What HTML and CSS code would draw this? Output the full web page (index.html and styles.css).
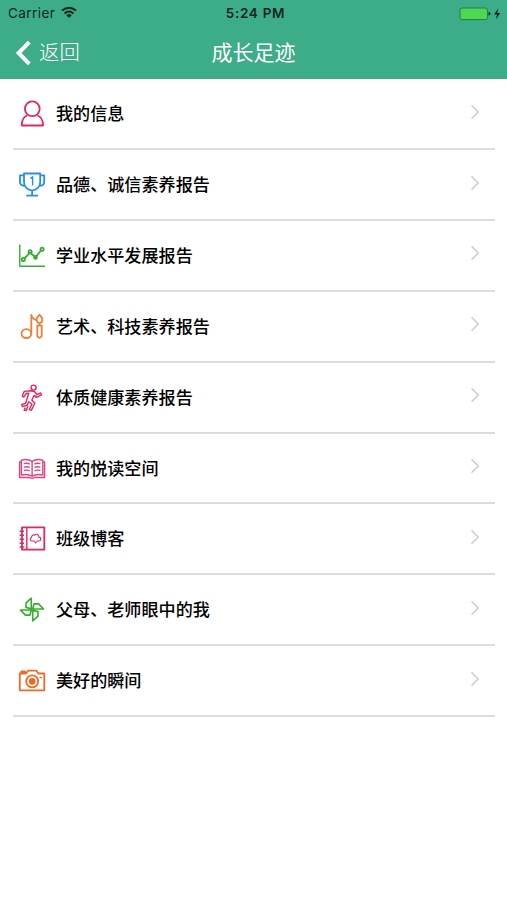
FILE: index.html
```html
<!DOCTYPE html>
<html lang="zh-CN">
<head>
<meta charset="utf-8">
<title>成长足迹</title>
<link rel="stylesheet" href="styles.css">
</head>
<body>
<header class="header">
  <div class="status">
    <div class="carrier"><span>Carrier</span>
      <svg class="wifi" width="16" height="13" viewBox="0 0 16 13"><g fill="none" stroke="#10271f" stroke-width="1.9"><path d="M1 4.6Q8-1.3 15 4.6"/><path d="M3.5 7.4Q8 3.6 12.5 7.4"/></g><path d="M5.2 9.2Q8 7 10.8 9.2L8 12z" fill="#10271f"/></svg>
    </div>
    <div class="time">5:24 PM</div>
    <div class="power">
      <svg width="44" height="14" viewBox="0 0 44 14"><rect x="1" y="1" width="27.5" height="11.6" rx="2.2" fill="#4cd94f" stroke="#267c4c" stroke-width="1"/><path d="M29.5 5q2 .2 2 1.8t-2 1.8z" fill="#10271f"/><path d="M39.2 1.5L35 7.5h3l-1 4.7 4.3-6.2h-3z" fill="#10271f"/></svg>
    </div>
  </div>
  <nav class="nav">
    <a class="back"><svg width="18" height="28" viewBox="0 0 18 28"><path d="M14.3 3.2L3.6 14l10.7 10.8" fill="none" stroke="#fff" stroke-width="4"/></svg><span>返回</span></a>
    <h1 class="title">成长足迹</h1>
  </nav>
</header>
<ul class="list">
  <li class="row">
    <svg class="icon pink" viewBox="0 0 32 32"><circle cx="16.3" cy="10.8" r="7.4"/><path d="M11.2 17.5C7.2 18.8 5.8 22 5.8 27.5H27C27 22 25.3 18.8 21.4 17.5"/></svg>
    <span class="label">我的信息</span><svg class="chevron" viewBox="0 0 10 16"><path d="M1.5 1.3L8.2 8l-6.7 6.7"/></svg>
  </li>
  <li class="row">
    <svg class="icon blue" viewBox="0 0 32 32"><path d="M8 4.5H24.2V13Q24.2 20 16.1 21.6Q8 20 8 13ZM8 6.3H4V13.2Q4.2 16.8 8.8 16.8M24.2 6.3H28.2V13.2Q28 16.8 23.4 16.8M16.1 21.6V26.3M10.3 26.7H22"/><path class="thin" d="M14.4 9.6L16.6 7.8V16.4"/></svg>
    <span class="label">品德、诚信素养报告</span><svg class="chevron" viewBox="0 0 10 16"><path d="M1.5 1.3L8.2 8l-6.7 6.7"/></svg>
  </li>
  <li class="row">
    <svg class="icon green" viewBox="0 0 32 32"><path class="thin" d="M3.8 4.5V26.2H29"/><path d="M8.3 18.5L14 12.7L19.6 17.2L25.2 10.2"/><circle cx="7.3" cy="19.4" r="1.6"/><circle cx="14.1" cy="11.8" r="1.6"/><circle cx="19.5" cy="17.4" r="1.4"/><circle cx="26.1" cy="9.2" r="1.6"/></svg>
    <span class="label">学业水平发展报告</span><svg class="chevron" viewBox="0 0 10 16"><path d="M1.5 1.3L8.2 8l-6.7 6.7"/></svg>
  </li>
  <li class="row">
    <svg class="icon orange-light" viewBox="0 0 32 32"><ellipse cx="10.4" cy="22.6" rx="4.9" ry="4.4"/><path d="M15.3 22.6V4Q16.4 8 19.8 8.8M23.6 3.6C22.8 5.2 20.3 6.2 20.5 8.8C20.7 11 22 12 23.4 12C25.2 12 26.5 10.6 26.4 8.6C26.3 6.4 24.4 5.4 23.6 3.6ZM21.3 14.6H25.7V25Q23.5 28.6 21.3 25ZM23.5 12V14.6"/></svg>
    <span class="label">艺术、科技素养报告</span><svg class="chevron" viewBox="0 0 10 16"><path d="M1.5 1.3L8.2 8l-6.7 6.7"/></svg>
  </li>
  <li class="row">
    <svg class="icon pink thin" viewBox="0 0 32 32"><circle cx="17.6" cy="5.6" r="2.5"/><path d="M15 8.7L8.2 9.4L6.2 14.2L8 15L10 11.5L12.8 11.3L10.5 18.5L9.6 21.3L5.7 22.5L6.3 24.6L11.2 23.3L12.7 19.7L16 22L13.3 27.7L15.4 28.3L18.8 21.2L15.8 18L18.2 13.4L20.5 15.4L25.6 12.8L24.7 11L21 12.7L18.4 9.5ZM9.4 25.7L8.1 28L10 28.6L12 24.2"/></svg>
    <span class="label">体质健康素养报告</span><svg class="chevron" viewBox="0 0 10 16"><path d="M1.5 1.3L8.2 8l-6.7 6.7"/></svg>
  </li>
  <li class="row">
    <svg class="icon pink-light thin" viewBox="0 0 32 32"><path d="M16.1 8.3Q11.5 5.4 5.4 7.2V22Q11.5 20.5 16.1 23.2Q20.7 20.5 26.8 22V7.2Q20.7 5.4 16.1 8.3ZM16.1 8.3V23M5.4 9H3.6V24.5H13.8Q16.1 26 18.4 24.5H28.6V9H26.8M7.8 10.7Q11 9.8 13.7 11M7.8 14.1Q11 13.2 13.7 14.4M7.8 17.5Q11 16.6 13.7 17.8M18.5 11Q21.2 9.8 24.4 10.7M18.5 14.4Q21.2 13.2 24.4 14.1M18.5 17.8Q21.2 16.6 24.4 17.5"/></svg>
    <span class="label">我的悦读空间</span><svg class="chevron" viewBox="0 0 10 16"><path d="M1.5 1.3L8.2 8l-6.7 6.7"/></svg>
  </li>
  <li class="row">
    <svg class="icon pink" viewBox="0 0 32 32"><rect x="6" y="4.3" width="22.3" height="22.4"/><path class="thin" d="M10.8 4.3V26.7M3.6 8.2H8M3.6 12.2H8M3.6 16.2H8M3.6 20.2H8M3.6 24H8"/><path class="fine" d="M16 18C13.7 18 13.5 15.2 15.5 14.8C15.3 12.3 17.5 11.5 18.8 12.2C20.4 10.3 23.2 11.7 22.8 14.1C25.7 14.5 25.2 18 22.7 18H21.5L19.7 20L18.2 18Z"/></svg>
    <span class="label">班级博客</span><svg class="chevron" viewBox="0 0 10 16"><path d="M1.5 1.3L8.2 8l-6.7 6.7"/></svg>
  </li>
  <li class="row">
    <svg class="icon green pinwheel" viewBox="0 0 32 32"><path d="M15.3 14.7V4.2L10 8.8V13.4ZM16.8 15H27.6L22.6 9.9H18ZM16.7 16.4V26.9L22 22.2V17.6ZM15.2 16H4.4L9.4 21.1H14Z"/></svg>
    <span class="label">父母、老师眼中的我</span><svg class="chevron" viewBox="0 0 10 16"><path d="M1.5 1.3L8.2 8l-6.7 6.7"/></svg>
  </li>
  <li class="row">
    <svg class="icon orange" viewBox="0 0 32 32"><path d="M3.8 8.5H10L12 5.7H20.4L22.4 8.5H28.3V25.3H3.8ZM5.3 8V6.5H9V8"/><circle cx="16.2" cy="16.3" r="6"/><circle class="dot" cx="16.2" cy="16.3" r="2.5"/><path class="thin" d="M23.5 12.5H26"/></svg>
    <span class="label">美好的瞬间</span><svg class="chevron" viewBox="0 0 10 16"><path d="M1.5 1.3L8.2 8l-6.7 6.7"/></svg>
  </li>
</ul>
</body>
</html>
```
FILE: styles.css
```css
* { box-sizing: border-box; }
body {
  margin: 0;
  background: #fff;
  color: #000;
  font-family: Inter, "Noto Sans CJK SC", sans-serif;
}
.header { height: 79.3px; background: #3dac88; }
.status {
  height: 27px;
  padding: 0 4px 0 8px;
  display: grid;
  grid-template-columns: 1fr auto 1fr;
  align-items: center;
  color: #10271f;
  font-size: 13.5px;
  line-height: 27px;
}
.carrier { display: flex; align-items: center; gap: 6px; letter-spacing: .45px; }
.wifi { margin-top: -2px; }
.time { font-weight: 600; font-size: 13.5px; letter-spacing: .7px; }
.power { display: flex; justify-content: flex-end; }
.nav {
  height: 52px;
  padding: 0 15px;
  display: grid;
  grid-template-columns: 1fr auto 1fr;
  align-items: center;
  color: #fff;
}
.back { display: flex; align-items: center; gap: 6px; font-size: 20.4px; line-height: 28px; font-weight: 300; }
.title { margin: 0; font-size: 21px; line-height: 28px; font-weight: 400; }
.list { list-style: none; margin: 0; padding: 0 12px 0 13px; }
.row {
  height: 70.87px;
  padding: 1px 15px 0 3px;
  display: flex;
  align-items: center;
  border-bottom: 2px solid #dcdcdc;
}
.icon {
  width: 32px;
  height: 32px;
  margin-right: 8px;
  fill: none;
  stroke-width: 1.8;
  stroke-linejoin: round;
}
.label { flex: 1; font-size: 17.1px; line-height: 26px; font-weight: 500; }
.chevron { width: 10px; height: 16px; margin-top: -5px; fill: none; stroke: #cecece; stroke-width: 1.6; }
.thin { stroke-width: 1.4; }
.fine { stroke-width: 1.1; }
.pinwheel { stroke-width: 1.6; }
.pink { stroke: #e32764; }
.pink-light { stroke: #e04580; }
.blue { stroke: #2390ed; }
.green { stroke: #35ad2d; }
.orange { stroke: #ed6b25; }
.orange-light { stroke: #ef7e3c; }
.dot { fill: #ed6b25; }
```
